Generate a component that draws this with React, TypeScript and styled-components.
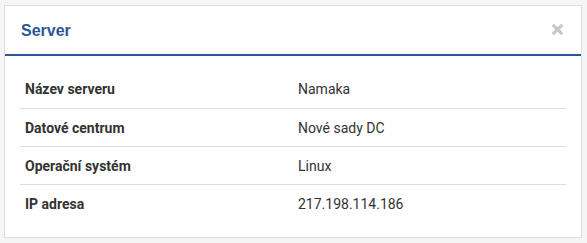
import React from "react";
import styled, { createGlobalStyle } from "styled-components";

const Global = createGlobalStyle`
  html, body { margin: 0; padding: 0; background: #f5f5f5; }
  body { padding: 5px 5px 6px 4px; }
  * { box-sizing: border-box; }
`;

const Card = styled.section`
  width: 578px;
  height: 233px;
  background: #fff;
  border: 1px solid #dddddd;
  display: flex;
  flex-direction: column;
`;

const Header = styled.header`
  height: 50px;
  border-bottom: 2px solid #2b5797;
  padding: 0 18px 0 16px;
  display: flex;
  align-items: center;
  justify-content: space-between;
`;

const Title = styled.h3`
  margin: 0;
  font-family: "Liberation Sans", Arial, sans-serif;
  font-weight: 700;
  font-size: 16px;
  color: #2b5797;
  padding-top: 1px;
`;

const Close = styled.button`
  border: 0;
  background: transparent;
  padding: 0;
  width: 11px;
  height: 11px;
  display: flex;
  color: #c6c6c6;
  cursor: pointer;
  margin-top: -1px;
`;

const Body = styled.div`
  padding: 14px 15px 14px 15px;
`;

const Table = styled.div`
  display: flex;
  flex-direction: column;
`;

const Row = styled.div<{ $first?: boolean }>`
  display: grid;
  grid-template-columns: 1fr 1fr;
  height: 38px;
  align-items: center;
  border-top: ${(p) => (p.$first ? "0" : "1px solid #dddddd")};
  font-family: Roboto, "Liberation Sans", sans-serif;
  font-size: 14px;
  color: #333;
`;

const Label = styled.div`
  font-weight: 700;
  padding-left: 5px;
  color: #333;
`;

const Value = styled.div`
  font-weight: 400;
  padding-left: 5px;
  color: #333;
`;

const rows = [
  ["Název serveru", "Namaka"],
  ["Datové centrum", "Nové sady DC"],
  ["Operační systém", "Linux"],
  ["IP adresa", "217.198.114.186"],
];

export default function App() {
  return (
    <>
      <Global />
      <Card>
        <Header>
          <Title>Server</Title>
          <Close aria-label="Zavřít">
            <svg width="11" height="11" viewBox="0 0 11 11">
              <path
                d="M1.8 1.8 L9.2 9.2 M9.2 1.8 L1.8 9.2"
                stroke="currentColor"
                strokeWidth="3.2"
                strokeLinecap="round"
              />
            </svg>
          </Close>
        </Header>
        <Body>
          <Table>
            {rows.map(([k, v], i) => (
              <Row key={k} $first={i === 0}>
                <Label>{k}</Label>
                <Value>{v}</Value>
              </Row>
            ))}
          </Table>
        </Body>
      </Card>
    </>
  );
}
